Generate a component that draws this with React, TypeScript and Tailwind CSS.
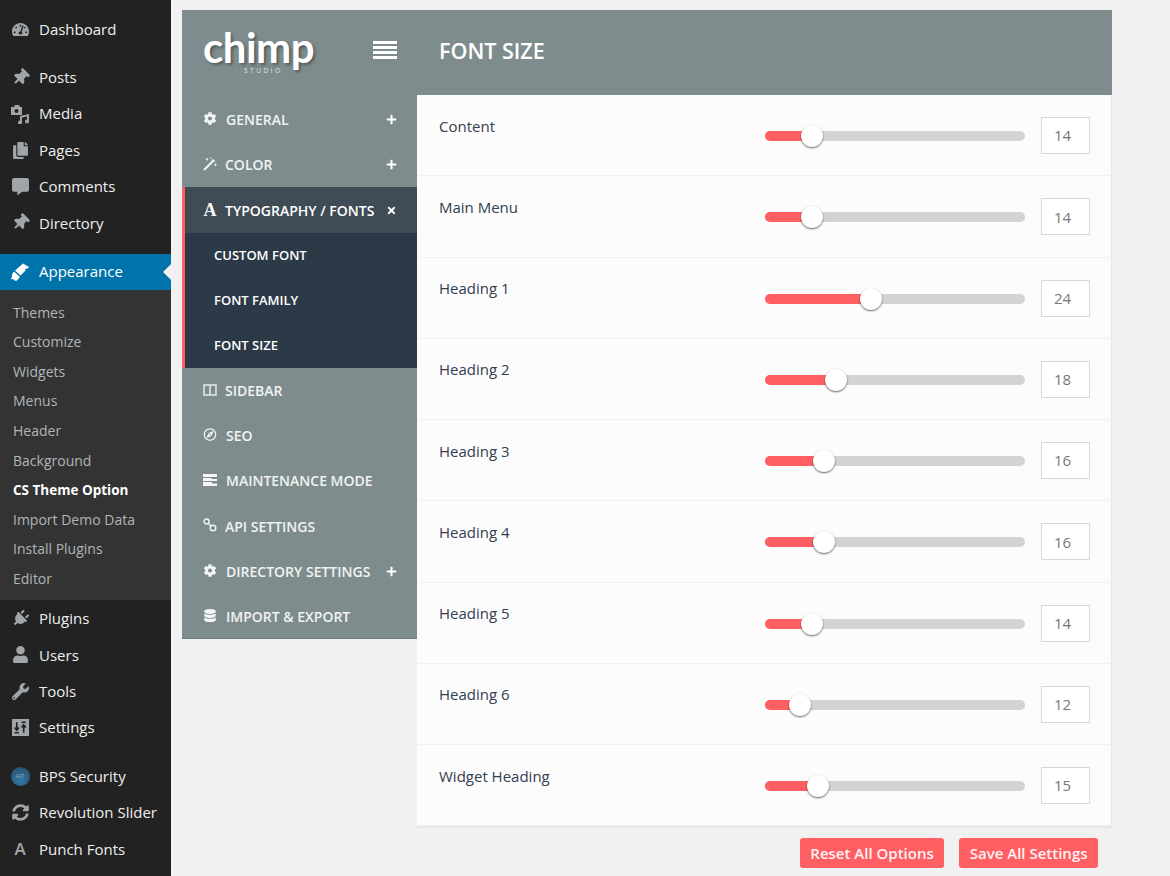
import {
  FaCog,
  FaDatabase,
  FaThumbtack,
  FaUser,
  FaWrench,
  FaSyncAlt,
  FaTachometerAlt,
  FaCopy,
  FaCommentAlt,
  FaPlug,
  FaPlus,
  FaTimes,
  FaRegCompass,
} from "react-icons/fa";

type IconProps = { size?: number; className?: string };

function PinIcon({ size, className }: IconProps) {
  return <FaThumbtack size={size} className={`rotate-45 ${className}`} />;
}

function PlugIcon({ size, className }: IconProps) {
  return <FaPlug size={size} className={`rotate-45 ${className}`} />;
}

function MediaIcon({ className }: IconProps) {
  return (
    <svg viewBox="0 0 20 20" width="20" height="20" fill="currentColor" className={className}>
      <path d="M1 3h3l1-2h4l1 2h2v8H1z M6.500 5a2 2 0 1 0 .01 0z" fillRule="evenodd" />
      <path d="M10 12l9-2v7.500a2 2 0 1 1-2-2V12.500l-5 1v5a2 2 0 1 1-2-2z" />
    </svg>
  );
}

function BrushIcon({ className }: IconProps) {
  return (
    <svg viewBox="0 0 20 20" width="20" height="20" fill="currentColor" className={className}>
      <path d="M13 1.500l6 3.500-2 2-2-.5.500 2-5 5-5.500-5z" />
      <path d="M4 9.500l6 5.500-3 3.500c-1 .5-2 .5-2.500-.2L3 17l-1 .5-1-1 1.300-2.500c-.6-.8-.5-1.500 0-2.200z" />
    </svg>
  );
}

function SettingsIcon({ className }: IconProps) {
  return (
    <svg viewBox="0 0 16 16" width="17" height="17" className={className}>
      <rect x="0" y="0" width="16" height="16" fill="currentColor" />
      <path d="M4.500 3v7M2.500 8l2 2.500 2-2.500M2.500 13h4M11 13V6M9 8l2-2.500L13 8M9 3h4" stroke="#222222" strokeWidth="1.500" fill="none" />
    </svg>
  );
}

function WandIcon({ className }: IconProps) {
  return (
    <svg viewBox="0 0 14 14" width="14" height="14" className={className}>
      <path d="M1 13L9.500 4.500" stroke="currentColor" strokeWidth="2.200" />
      <path d="M9.500 4.500L11 3" stroke="currentColor" strokeWidth="3" />
      <path d="M4 1v2.500M2.700 2.200h2.600M12.500 6.500v2.500M11.200 7.700h2.600M8 .5v1.500" stroke="currentColor" strokeWidth=".9" />
    </svg>
  );
}

function ColumnsIcon({ className }: IconProps) {
  return (
    <svg viewBox="0 0 14 14" width="14" height="14" fill="none" stroke="currentColor" strokeWidth="1.300" className={className}>
      <rect x="1" y="2" width="12" height="10" />
      <path d="M7 2v10" />
    </svg>
  );
}

function ServerIcon({ className }: IconProps) {
  return (
    <svg viewBox="0 0 14 12" width="14" height="12" fill="currentColor" className={className}>
      <path d="M0 0h14v3H0z" />
      <path d="M0 4h8.500v1H14v2H0z" />
      <path d="M0 8h9v1.500h5V12H0z" />
    </svg>
  );
}

function LinkIcon({ className }: IconProps) {
  return (
    <svg viewBox="0 0 14 14" width="14" height="14" fill="none" stroke="currentColor" strokeWidth="1.400" className={className}>
      <circle cx="3.500" cy="3.500" r="2.500" />
      <circle cx="10" cy="10" r="2.800" />
      <path d="M5.500 5.500L8 8" />
    </svg>
  );
}

const topMenu = [
  { label: "Dashboard", icon: FaTachometerAlt, cls: "h-[36px] mt-[11.5px]" },
  { label: "Posts", icon: PinIcon, cls: "h-[36px] mt-[12px]" },
  { label: "Media", icon: MediaIcon, cls: "h-[36.4px]" },
  { label: "Pages", icon: FaCopy, cls: "h-[36.4px]" },
  { label: "Comments", icon: FaCommentAlt, cls: "h-[36.4px]" },
  { label: "Directory", icon: PinIcon, cls: "h-[36.4px]" },
];

const subMenu = ["Themes", "Customize", "Widgets", "Menus", "Header", "Background", "CS Theme Option", "Import Demo Data", "Install Plugins", "Editor"];

const bottomMenu = [
  { label: "Plugins", icon: PlugIcon },
  { label: "Users", icon: FaUser },
  { label: "Tools", icon: FaWrench },
  { label: "Settings", icon: SettingsIcon },
];

const navTop = [
  { label: "GENERAL", icon: FaCog, plus: true, gap: "ml-[9px]" },
  { label: "COLOR", icon: WandIcon, plus: true, gap: "ml-[8px]" },
];

const navBottom = [
  { label: "SIDEBAR", icon: ColumnsIcon, gap: "ml-[8px]" },
  { label: "SEO", icon: FaRegCompass, gap: "ml-[9px]" },
  { label: "MAINTENANCE MODE", icon: ServerIcon, gap: "ml-[9px]" },
  { label: "API SETTINGS", icon: LinkIcon, gap: "ml-[8px]" },
  { label: "DIRECTORY SETTINGS", icon: FaCog, plus: true, gap: "ml-[9px]" },
  { label: "IMPORT & EXPORT", icon: FaDatabase, gap: "ml-[9px]" },
];

const sizes = [
  { label: "Content", value: 14, pct: 47 },
  { label: "Main Menu", value: 14, pct: 47 },
  { label: "Heading 1", value: 24, pct: 106 },
  { label: "Heading 2", value: 18, pct: 71 },
  { label: "Heading 3", value: 16, pct: 59 },
  { label: "Heading 4", value: 16, pct: 59 },
  { label: "Heading 5", value: 14, pct: 47 },
  { label: "Heading 6", value: 12, pct: 35 },
  { label: "Widget Heading", value: 15, pct: 53 },
];

function NavRow({ label, icon: Icon, plus, gap, cls }: { label: string; icon: React.ComponentType<IconProps>; plus?: boolean; gap: string; cls: string }) {
  return (
    <div className={`${cls} flex items-center pl-[21px] pr-[20px]`}>
      <Icon size={13} className="w-[14px] shrink-0 text-[#f4f6f6] -translate-y-px" />
      <span className={`${gap} text-[14px] font-semibold text-[#f0f3f3] whitespace-nowrap`}>{label}</span>
      {plus && <FaPlus size={11} className="ml-auto text-white" />}
    </div>
  );
}

function SizeRow({ label, value, pct }: { label: string; value: number; pct: number }) {
  return (
    <div className="h-[81.25px] border-b border-[#f1f1f1] pl-[22px] flex">
      <div className="w-[326px] shrink-0 pt-[20.6px] text-[15px] leading-[20px] text-[#34404f]">{label}</div>
      <div className="w-[260px] shrink-0 h-[10px] mt-[36px] rounded-full bg-[#d3d3d3] relative">
        <div className="h-full rounded-l-full bg-[#ff5e62]" style={{ width: pct }} />
        <div
          className="absolute top-[-6px] w-[22px] h-[22px] rounded-full bg-white shadow-[0_1px_2px_rgba(0,0,0,0.6)]"
          style={{ left: pct - 11 }}
        />
      </div>
      <div className="ml-[16px] mt-[22px] w-[49px] shrink-0 h-[37px] bg-white border border-[#d8d8d8] flex items-center pl-[12px] text-[15px] text-[#777777]">
        {value}
      </div>
    </div>
  );
}

export default function App() {
  return (
    <div className="flex min-h-[876px] bg-[#f1f1f1] font-['Open_Sans',sans-serif] overflow-hidden">
      <aside className="w-[171px] h-[876px] shrink-0 bg-[#222222] text-[#eeeeee] text-[15px]">
        {topMenu.map((m) => (
          <div key={m.label} className={`flex items-center pl-[10px] ${m.cls}`}>
            <span className="w-[20px] shrink-0 flex justify-center">
              <m.icon size={17} className="text-[#a0a5aa]" />
            </span>
            <span className="ml-[9px]">{m.label}</span>
          </div>
        ))}
        <div className="mt-[12.5px] h-[36px] bg-[#0073aa] flex items-center pl-[10px] text-white relative">
          <span className="w-[20px] shrink-0 flex justify-center">
            <BrushIcon className="text-white" />
          </span>
          <span className="ml-[9px]">Appearance</span>
          <div className="absolute right-0 top-[10px] border-y-[8px] border-y-transparent border-r-[8px] border-r-[#f1f1f1]" />
        </div>
        <div className="h-[310.8px] bg-[#333333] pt-[7.8px] text-[14px] text-[#b0b5ba]">
          {subMenu.map((s) => (
            <div key={s} className={`h-[29.6px] flex items-center pl-[13px] ${s === "CS Theme Option" ? "font-bold text-[13.5px] text-white" : ""}`}>
              {s}
            </div>
          ))}
        </div>
        {bottomMenu.map((m) => (
          <div key={m.label} className="h-[36.4px] flex items-center pl-[10px]">
            <span className="w-[20px] shrink-0 flex justify-center">
              <m.icon size={17} className="text-[#a0a5aa]" />
            </span>
            <span className="ml-[9px]">{m.label}</span>
          </div>
        ))}
        <div className="mt-[12px] h-[36.4px] flex items-center pl-[10px]">
          <span className="w-[20px] shrink-0 flex justify-center">
            <span className="w-[19px] h-[19px] rounded-full bg-[radial-gradient(circle_at_50%_70%,#2f7aa8,#2b4a63)] flex items-center justify-center text-[6px] leading-none text-[#8fa9bb]">
              AIT
            </span>
          </span>
          <span className="ml-[9px]">BPS Security</span>
        </div>
        <div className="h-[36.4px] flex items-center pl-[10px]">
          <span className="w-[20px] shrink-0 flex justify-center">
            <FaSyncAlt size={17} className="text-[#a0a5aa]" />
          </span>
          <span className="ml-[9px]">Revolution Slider</span>
        </div>
        <div className="h-[36.4px] flex items-center pl-[10px]">
          <span className="w-[20px] shrink-0 text-center text-[17px] text-[#a0a5aa] font-semibold">A</span>
          <span className="ml-[9px]">Punch Fonts</span>
        </div>
      </aside>

      <main className="w-[930px] ml-[11px] mt-[10px]">
        <div className="flex items-start">
          <div className="w-[235px] shrink-0 bg-[#7f8c8d] border-b border-[#6f7b7c]">
            <div className="h-[85px] flex items-center pl-[21px] pr-[20px]">
              <div className="w-[110px] flex flex-col text-white">
                <span className="text-[42px] leading-[30px] font-['Lato',sans-serif] font-bold tracking-[-0.5px] [text-shadow:2px_2px_3px_rgba(0,0,0,0.35)]">chimp</span>
                <span className="ml-[41px] mt-[6px] text-[6.5px] leading-[6px] tracking-[2.5px] text-[#dfe3e3]">STUDIO</span>
              </div>
              <div className="ml-auto w-[24px] flex flex-col gap-[2px] -translate-y-[3px]">
                <div className="h-[3px] bg-white" />
                <div className="h-[3px] bg-white" />
                <div className="h-[3px] bg-white" />
                <div className="h-[3px] bg-white" />
              </div>
            </div>
            <div className="pt-[2px]">
              {navTop.map((n) => (
                <NavRow key={n.label} {...n} cls="h-[45px]" />
              ))}
            </div>
            <div className="border-l-[3px] border-[#ff5e62]">
              <div className="h-[46px] bg-[#3f4c56] flex items-center pl-[18px] pr-[20px] text-white">
                <span className="w-[14px] shrink-0 text-center font-['Liberation_Serif',serif] font-bold text-[18px] leading-none text-[#f4f6f6]">A</span>
                <span className="ml-[8px] text-[14px] font-semibold whitespace-nowrap">TYPOGRAPHY / FONTS</span>
                <FaTimes size={11} className="ml-auto" />
              </div>
              <div className="bg-[#2c3a47] text-[13px] font-semibold text-white">
                {["CUSTOM FONT", "FONT FAMILY", "FONT SIZE"].map((s) => (
                  <div key={s} className="h-[45px] flex items-center pl-[29px]">
                    {s}
                  </div>
                ))}
              </div>
            </div>
            <div className="h-[269.5px] overflow-hidden">
              {navBottom.map((n) => (
                <NavRow key={n.label} {...n} cls="h-[45.2px]" />
              ))}
            </div>
          </div>

          <div className="grow min-w-0">
            <div className="h-[85px] -ml-px bg-[#7f8c8d] flex items-center pl-[23px] pb-[3px] text-[21.5px] font-semibold text-white">FONT SIZE</div>
            <div className="bg-[#fcfcfc] border-r border-b-2 border-[#e6e6e6]">
              {sizes.map((s) => (
                <SizeRow key={s.label} {...s} />
              ))}
            </div>
            <div className="flex justify-end gap-[15px] pt-[10px] pr-[14px]">
              <button className="h-[30px] px-[10.5px] pb-[1px] rounded-[3px] bg-[#ff5e62] text-[15px] font-semibold text-[#fff3f3]">Reset All Options</button>
              <button className="h-[30px] px-[10.5px] pb-[1px] rounded-[3px] bg-[#ff5e62] text-[15px] font-semibold text-[#fff3f3]">Save All Settings</button>
            </div>
          </div>
        </div>
      </main>
    </div>
  );
}
